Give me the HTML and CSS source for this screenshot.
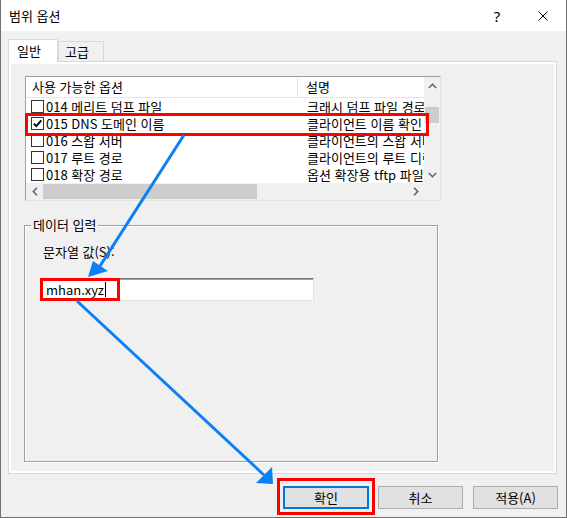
FILE: index.html
```html
<!DOCTYPE html>
<html lang="ko">
<head>
<meta charset="utf-8">
<title>범위 옵션</title>
<link rel="stylesheet" href="styles.css">
</head>
<body>
<div class="window">
  <div class="titlebar">
    <span class="title">범위 옵션</span>
    <span class="cap-btn help">?</span>
    <span class="cap-btn close"><svg width="10" height="10" viewBox="0 0 10 10"><path d="M0.5 0.5L9.5 9.5M9.5 0.5L0.5 9.5" stroke="#000" stroke-width="1" fill="none"/></svg></span>
  </div>
  <div class="client">
    <div class="tabs">
      <div class="tab active">일반</div>
      <div class="tab">고급</div>
    </div>
    <div class="panel">
      <div class="list">
        <div class="lv">
          <div class="lv-header"><div class="h1">사용 가능한 옵션</div><div class="h2">설명</div></div>
          <div class="lv-row"><div class="c1"><span class="cb"></span><span>014 메리트 덤프 파일</span></div><div class="c2">크래시 덤프 파일 경로</div></div>
          <div class="lv-row"><div class="c1"><span class="cb"><svg width="11" height="11" viewBox="0 0 11 11"><path d="M1.8 5.6L4.3 8.2L9.3 2.4" stroke="#000" stroke-width="1.9" fill="none"/></svg></span><span>015 DNS 도메인 이름</span></div><div class="c2">클라이언트 이름 확인</div></div>
          <div class="lv-row"><div class="c1"><span class="cb"></span><span>016 스왑 서버</span></div><div class="c2">클라이언트의 스왑 서버</div></div>
          <div class="lv-row"><div class="c1"><span class="cb"></span><span>017 루트 경로</span></div><div class="c2">클라이언트의 루트 디렉터리</div></div>
          <div class="lv-row"><div class="c1"><span class="cb"></span><span>018 확장 경로</span></div><div class="c2">옵션 확장용 tftp 파일</div></div>
        </div>
        <div class="vscroll">
          <div class="sb-btn"><svg width="9" height="6" viewBox="0 0 9 6"><path d="M0.8 5L4.5 1.3L8.2 5" stroke="#606060" stroke-width="1.5" fill="none"/></svg></div>
          <div class="vthumb"></div>
          <div class="sb-fill"></div>
          <div class="sb-btn"><svg width="9" height="6" viewBox="0 0 9 6"><path d="M0.8 1L4.5 4.7L8.2 1" stroke="#606060" stroke-width="1.5" fill="none"/></svg></div>
        </div>
        <div class="hscroll">
          <div class="sb-btn h"><svg width="6" height="9" viewBox="0 0 6 9"><path d="M5 0.8L1.3 4.5L5 8.2" stroke="#606060" stroke-width="1.5" fill="none"/></svg></div>
          <div class="hthumb"></div>
          <div class="sb-fill"></div>
          <div class="sb-btn h"><svg width="6" height="9" viewBox="0 0 6 9"><path d="M1 0.8L4.7 4.5L1 8.2" stroke="#606060" stroke-width="1.5" fill="none"/></svg></div>
        </div>
        <div class="corner"></div>
      </div>
      <fieldset class="group">
        <legend>데이터 입력</legend>
        <div class="field-label">문자열 값(S):</div>
        <div class="textbox"><span>mhan.xyz</span><span class="caret"></span></div>
      </fieldset>
    </div>
    <div class="buttons">
      <button class="btn default">확인</button>
      <button class="btn">취소</button>
      <button class="btn">적용(A)</button>
    </div>
  </div>
  <svg class="annot" width="567" height="518" viewBox="0 0 567 518">
    <g fill="none" stroke="#ff0000" stroke-width="3">
      <rect x="26.5" y="114.5" width="401" height="20"/>
      <rect x="41.5" y="279.5" width="77" height="20"/>
      <rect x="278.5" y="479.5" width="95" height="34"/>
    </g>
    <g stroke="#0b80f5" stroke-width="3" fill="#0b80f5">
      <line x1="184" y1="135" x2="100" y2="266"/>
      <polygon points="88,277 93,261 108,271" stroke="none"/>
      <line x1="77" y1="301" x2="264" y2="475"/>
      <polygon points="273,484 256,483 272,467" stroke="none"/>
    </g>
  </svg>
</div>
</body>
</html>
```
FILE: styles.css
```css
html, body {
  margin: 0;
  padding: 0;
  background: #ffffff;
}
body {
  font-family: "Noto Sans CJK KR", "Malgun Gothic", sans-serif;
  font-size: 13px;
  color: #000;
}
.window {
  position: relative;
  width: 567px;
  height: 518px;
  box-sizing: border-box;
  border: 1px solid #707070;
  border-top: 0;
  background: #f0f0f0;
  display: flex;
  flex-direction: column;
  overflow: hidden;
}
.titlebar {
  flex: none;
  height: 31px;
  background: #fff;
  display: flex;
  align-items: center;
  padding-left: 8px;
}
.title {
  flex: 1;
  line-height: 16px;
}
.cap-btn {
  width: 46px;
  height: 31px;
  display: flex;
  align-items: center;
  justify-content: center;
}
.cap-btn.help {
  font-family: "Noto Sans", sans-serif;
  font-size: 15px;
}
.client {
  flex: 1;
  padding: 8px 8px 0 7px;
}
.tabs {
  display: flex;
  align-items: flex-end;
  height: 22px;
}
.tab {
  box-sizing: border-box;
  height: 20px;
  width: 46px;
  border: 1px solid #d9d9d9;
  border-bottom: 0;
  padding-left: 6px;
  line-height: 19px;
  background: #f0f0f0;
}
.tab.active {
  height: 23px;
  width: 50px;
  margin-bottom: -1px;
  padding-left: 8px;
  line-height: 21px;
  background: #fff;
  position: relative;
  z-index: 1;
}
.panel {
  box-sizing: border-box;
  width: 549px;
  height: 413px;
  border: 1px solid #d9d9d9;
  box-shadow: inset 0 0 0 2px #fff;
  padding: 14px 0 0 16px;
}
.list {
  box-sizing: border-box;
  width: 416px;
  height: 125px;
  border: 1px solid;
  border-color: #a0a0a0 #e3e3e3 #e3e3e3 #a0a0a0;
  background: #fff;
  display: grid;
  grid-template-columns: 398px 16px;
  grid-template-rows: 106px 17px;
}
.lv {
  overflow: hidden;
}
.lv-header {
  display: grid;
  grid-template-columns: 272px 1fr;
  height: 21px;
  box-sizing: border-box;
  border-bottom: 1px solid #e5e5e5;
  line-height: 20px;
}
.h1 {
  padding-left: 6px;
  border-right: 1px solid #e5e5e5;
}
.h2 {
  padding-left: 8px;
}
.lv-row {
  display: grid;
  grid-template-columns: 272px 240px;
  height: 17px;
  line-height: 17px;
  white-space: nowrap;
}
.c1 {
  display: flex;
  align-items: center;
  padding-left: 5px;
  gap: 2px;
}
.cb {
  box-sizing: border-box;
  width: 13px;
  height: 13px;
  border: 1px solid #333;
  background: #fff;
  display: flex;
  align-items: center;
  justify-content: center;
}
.c2 {
  padding-left: 9px;
}
.vscroll {
  background: #f0f0f0;
  display: flex;
  flex-direction: column;
}
.sb-btn {
  flex: none;
  height: 17px;
  display: flex;
  align-items: center;
  justify-content: center;
}
.sb-btn.h {
  width: 17px;
  height: auto;
}
.sb-fill {
  flex: 1;
}
.vthumb {
  height: 16px;
  margin: 13px 1px 0;
  background: #cdcdcd;
}
.hscroll {
  background: #f0f0f0;
  display: flex;
}
.hthumb {
  width: 214px;
  margin: 1px 0;
  background: #cdcdcd;
}
.corner {
  background: #f0f0f0;
}
.group {
  box-sizing: border-box;
  width: 414px;
  height: 245px;
  margin: 16px 0 0 -1px;
  padding: 11px 0 0 15px;
  border: 1px solid #a0a0a0;
  box-shadow: 1px 1px 0 #fff, inset 1px 1px 0 #fff;
  min-width: 0;
}
.group legend {
  margin-left: -9px;
  padding: 0 2px;
  line-height: 16px;
}
.field-label {
  margin-left: 3px;
  line-height: 16px;
}
.textbox {
  box-sizing: border-box;
  width: 274px;
  height: 23px;
  margin-top: 18px;
  border: 1px solid;
  border-color: #7a7a7a #e3e3e3 #e3e3e3 #7a7a7a;
  box-shadow: inset 0 1px 0 #a0a0a0;
  background: #fff;
  padding-left: 5px;
  display: flex;
  align-items: center;
  line-height: 16px;
}
.caret {
  width: 1px;
  height: 15px;
  background: #000;
  margin-left: 1px;
}
.buttons {
  display: flex;
  justify-content: flex-end;
  gap: 10px;
  margin-top: 12px;
}
.btn {
  box-sizing: border-box;
  width: 85px;
  height: 23px;
  padding: 0;
  border: 1px solid #adadad;
  background: #e1e1e1;
  font-family: inherit;
  font-size: 13px;
  color: #000;
  line-height: 16px;
}
.btn.default {
  width: 86px;
  margin-right: -1px;
  border: 2px solid #0078d7;
}
.annot {
  position: absolute;
  left: -1px;
  top: 0;
  pointer-events: none;
}
```
